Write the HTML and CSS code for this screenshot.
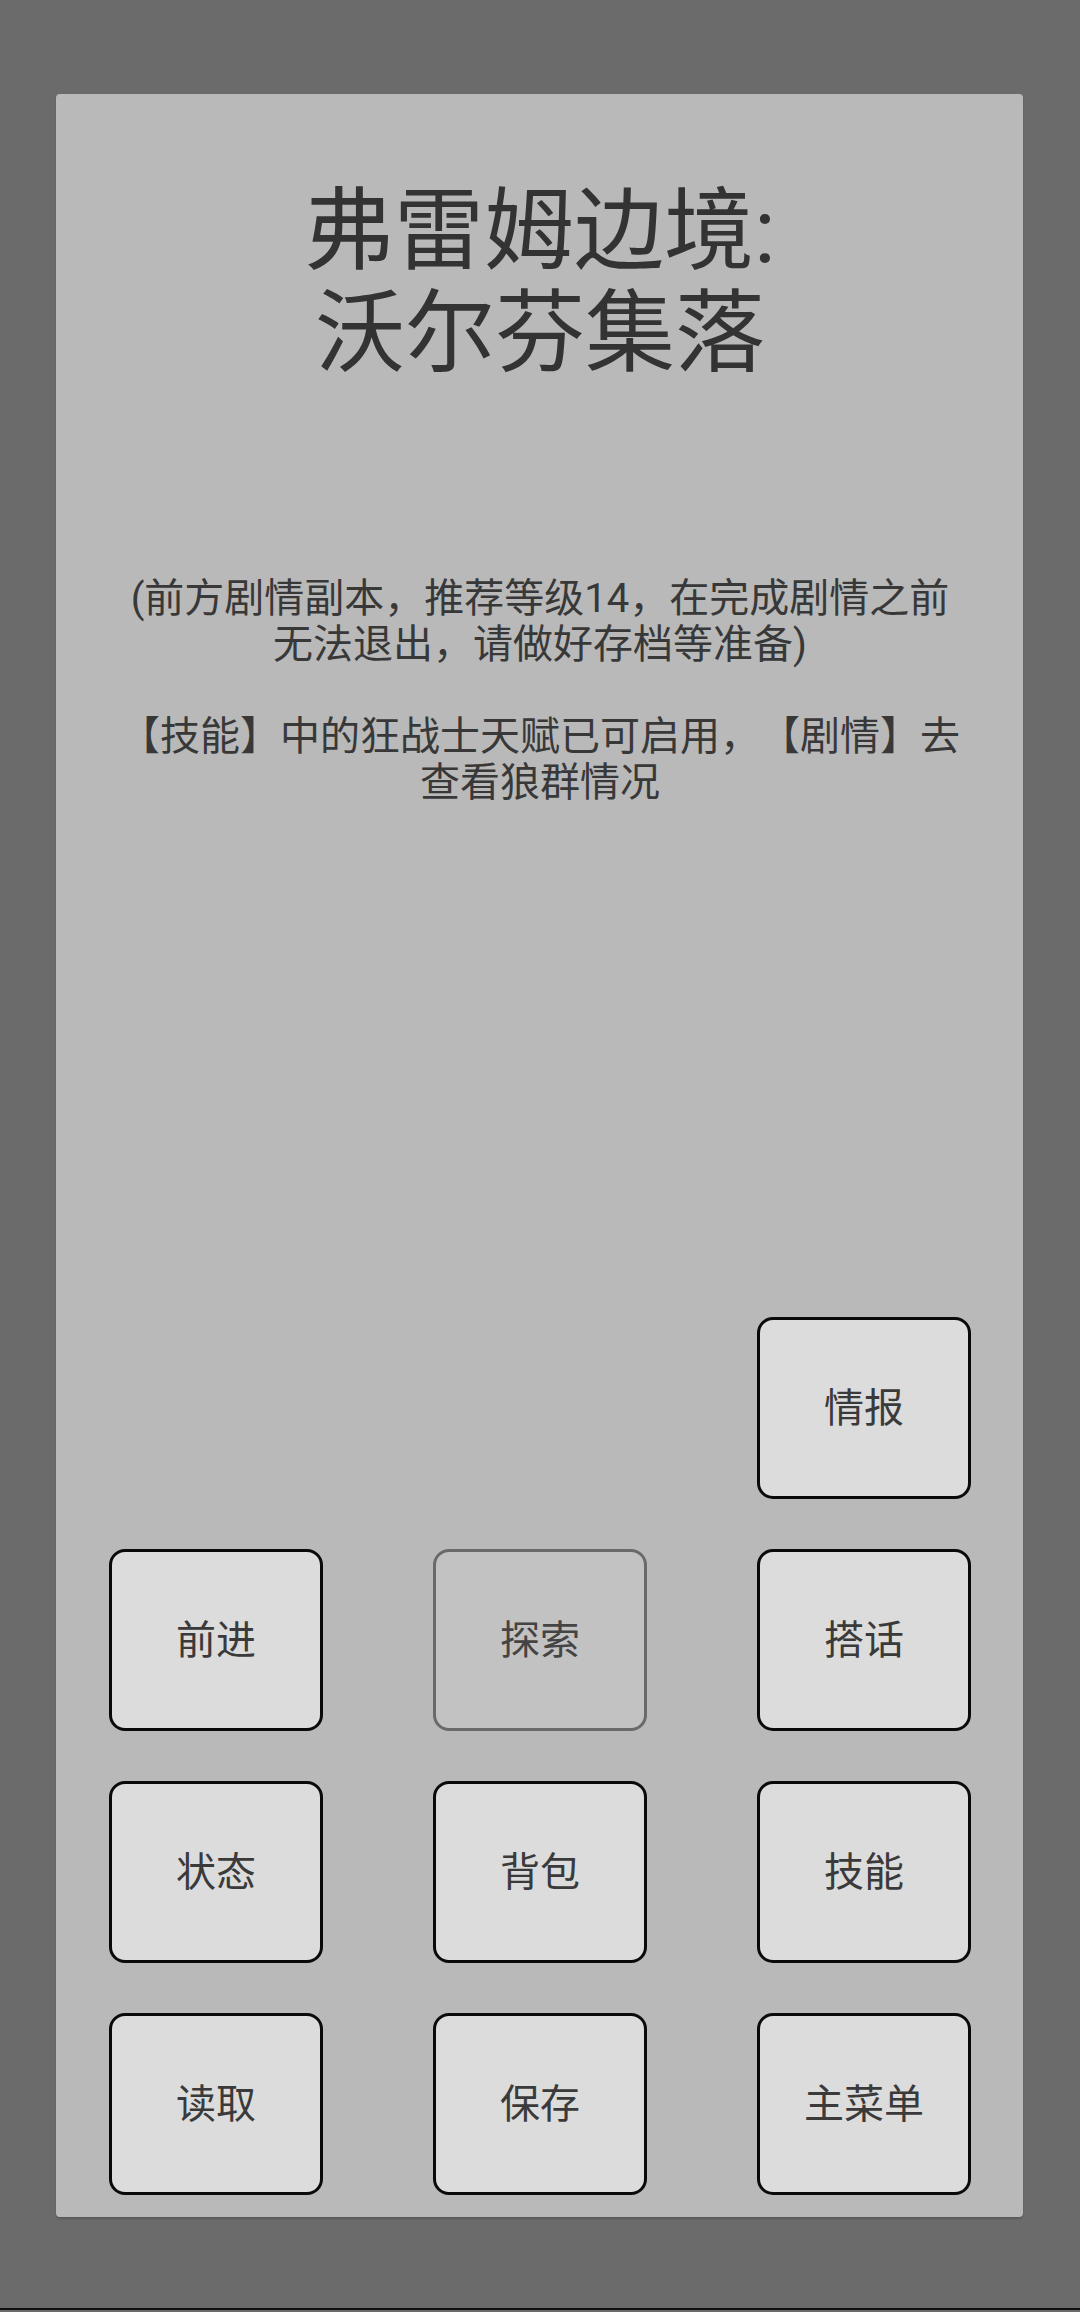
FILE: index.html
```html
<!DOCTYPE html>
<html lang="zh-CN">
  <head>
    <meta charset="UTF-8" />
    <meta name="viewport" content="width=device-width, initial-scale=1.0" />
    <title>沃尔芬集落</title>
    <link rel="stylesheet" href="styles.css">
  </head>
  <body>
    <div class="screen">
      <div class="panel">
        <h1 class="place">弗雷姆边境:<br />沃尔芬集落</h1>
        <div class="story">
          <p>(前方剧情副本，推荐等级14，在完成剧情之前<br />无法退出，请做好存档等准备)</p>
          <p>【技能】中的狂战士天赋已可启用，【剧情】去<br />查看狼群情况</p>
        </div>
        <div class="actions">
          <button class="intel">情报</button>
          <button>前进</button>
          <button class="off">探索</button>
          <button>搭话</button>
          <button>状态</button>
          <button>背包</button>
          <button>技能</button>
          <button>读取</button>
          <button>保存</button>
          <button>主菜单</button>
        </div>
      </div>
    </div>
  </body>
</html>
```

FILE: styles.css
```css
body {
  margin: 0;
  padding: 0;
  background-color: #6b6b6b;
  font-family: Roboto, "Noto Sans CJK SC", sans-serif;
}
.screen {
  height: 2310px;
  border-bottom: 2px solid #111;
  padding-top: 94px;
  box-sizing: border-box;
}
.panel {
  width: 967px;
  height: 2123px;
  margin-left: 56px;
  padding: 87px 52px 22px 53px;
  box-sizing: border-box;
  background-color: #b9b9b9;
  border-radius: 4px;
  box-shadow: 0 2px 2px rgba(0, 0, 0, 0.15);
  display: flex;
  flex-direction: column;
}
.place {
  margin: 0;
  font-size: 90px;
  font-weight: normal;
  line-height: 102px;
  text-align: center;
  color: #333;
}
.story {
  margin-top: 191px;
  text-align: center;
  font-size: 40px;
  line-height: 46px;
  color: #383838;
  /* keep full-width punctuation at full width */
  text-spacing-trim: space-all;
}
.story p {
  margin: 0;
}
.story p + p {
  margin-top: 46px;
}
.actions {
  margin-top: auto;
  display: grid;
  grid-template-columns: repeat(3, 214px);
  grid-auto-rows: 182px;
  justify-content: space-between;
  row-gap: 50px;
}
.actions button {
  box-sizing: border-box;
  border: 3px solid #0a0a0a;
  border-radius: 16px;
  background-color: #dcdcdc;
  color: #3a3a3a;
  font-family: inherit;
  font-size: 40px;
  padding: 0 0 6px;
  cursor: pointer;
}
.actions .intel {
  grid-column: 3;
}
.actions .off {
  background-color: #c2c2c2;
  border-color: #6a6a6a;
  color: #444;
}
```
